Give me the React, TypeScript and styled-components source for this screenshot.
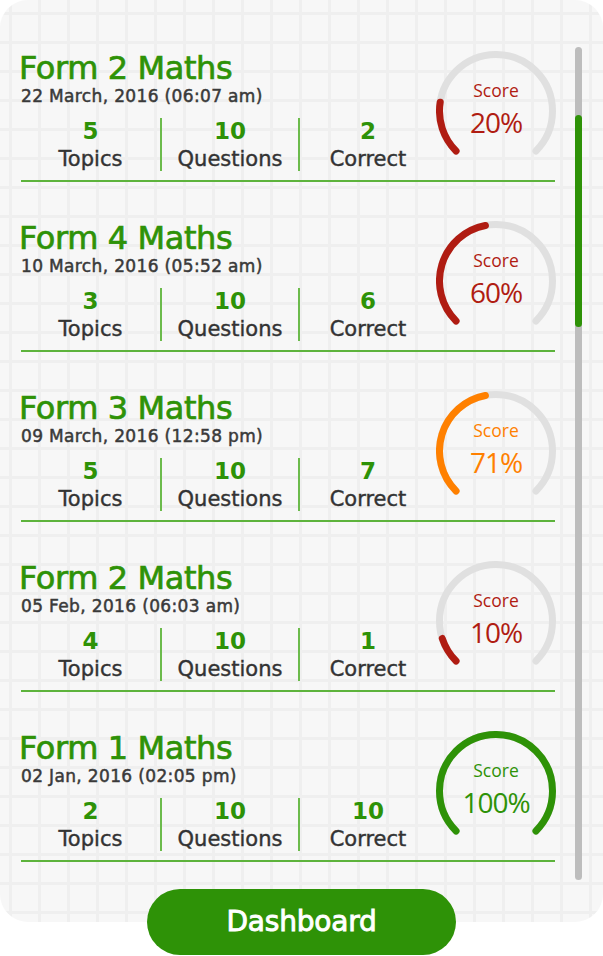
import React from "react";
import styled, { createGlobalStyle } from "styled-components";

const Global = createGlobalStyle`
  html, body { margin: 0; padding: 0; background: #ffffff; }
  body { font-family: "DejaVu Sans", Verdana, sans-serif; }
  * { box-sizing: border-box; }
`;

const Page = styled.div`
  width: 603px;
  height: 956px;
  overflow: hidden;
  display: flex;
  flex-direction: column;
`;

const Card = styled.div`
  height: 922px;
  border-radius: 28px;
  background-color: #f7f7f7;
  background-image:
    linear-gradient(to right, #efefef 3px, transparent 3px),
    linear-gradient(to bottom, #efefef 3px, transparent 3px);
  background-size: 29px 29px;
  background-position: 9px 12px;
  display: flex;
  overflow: hidden;
`;

const List = styled.div`
  width: 556px;
  padding: 41px 0 0 21px;
  display: flex;
  flex-direction: column;
  gap: 29px;
`;

const Item = styled.div`
  width: 534px;
  display: flex;
  align-items: flex-start;
  padding: 10px 0 9px;
  border-bottom: 2px solid #5db33c;
`;

const Info = styled.div`
  width: 415px;
  display: flex;
  flex-direction: column;
`;

const Title = styled.div`
  font-size: 32px;
  line-height: 34px;
  color: #2e9207;
  letter-spacing: -0.4px;
  margin-left: -2px;
  -webkit-text-stroke: 0.7px #2e9207;
`;

const DateText = styled.div`
  font-size: 17px;
  line-height: 20px;
  color: #3a3a3a;
  margin-top: 1px;
  letter-spacing: 0.35px;
  -webkit-text-stroke: 0.5px #3a3a3a;
`;

const Stats = styled.div`
  display: grid;
  grid-template-columns: 139px 138px 138px;
  margin-top: 12px;
`;

const Stat = styled.div<{ $divider?: boolean }>`
  display: flex;
  flex-direction: column;
  align-items: center;
  border-left: ${(p) => (p.$divider ? "2px solid #6cbb4c" : "none")};
`;

const Num = styled.div`
  font-size: 23px;
  line-height: 26px;
  font-weight: bold;
  color: #2e9207;
`;

const Label = styled.div`
  font-size: 21px;
  line-height: 24px;
  color: #333333;
  margin-top: 3px;
  -webkit-text-stroke: 0.4px #333333;
`;

const GaugeWrap = styled.div`
  position: relative;
  width: 120px;
  height: 120px;
  flex: none;
`;

const GaugeText = styled.div<{ $color: string }>`
  position: absolute;
  inset: 0;
  display: flex;
  flex-direction: column;
  align-items: center;
  padding-top: 29px;
  color: ${(p) => p.$color};
  font-family: "Open Sans", "Noto Sans", sans-serif;
`;

const ScoreLabel = styled.div`
  font-size: 17.5px;
  line-height: 20px;
`;

const ScoreValue = styled.div`
  font-size: 28px;
  line-height: 34px;
  margin-top: 5px;
  letter-spacing: -1px;
`;

const Track = styled.div`
  position: relative;
  margin: 47px 0 0 19px;
  width: 7px;
  height: 833px;
  border-radius: 4px;
  background: #bdbdbd;
`;

const Thumb = styled.div`
  position: absolute;
  left: 0;
  top: 68px;
  width: 7px;
  height: 212px;
  border-radius: 4px;
  background: #2e9207;
`;

const Button = styled.button`
  align-self: center;
  margin-top: -33px;
  width: 309px;
  height: 66px;
  border: none;
  border-radius: 33px;
  background: #2e9207;
  color: #ffffff;
  font-family: "DejaVu Sans", Verdana, sans-serif;
  font-size: 28px;
  letter-spacing: -0.2px;
  -webkit-text-stroke: 0.9px #ffffff;
  padding: 0 0 2px;
`;

type Entry = {
  title: string;
  date: string;
  topics: number;
  questions: number;
  correct: number;
  score: string;
  fill: number;
  color: string;
};

const data: Entry[] = [
  { title: "Form 2 Maths", date: "22 March, 2016 (06:07 am)", topics: 5, questions: 10, correct: 2, score: "20%", fill: 0.2, color: "#b01c12" },
  { title: "Form 4 Maths", date: "10 March, 2016 (05:52 am)", topics: 3, questions: 10, correct: 6, score: "60%", fill: 0.46, color: "#b01c12" },
  { title: "Form 3 Maths", date: "09 March, 2016 (12:58 pm)", topics: 5, questions: 10, correct: 7, score: "71%", fill: 0.46, color: "#ff8000" },
  { title: "Form 2 Maths", date: "05 Feb, 2016 (06:03 am)", topics: 4, questions: 10, correct: 1, score: "10%", fill: 0.1, color: "#b01c12" },
  { title: "Form 1 Maths", date: "02 Jan, 2016 (02:05 pm)", topics: 2, questions: 10, correct: 10, score: "100%", fill: 1, color: "#2e9207" },
];

const C = 60;
const R = 56.5;
const pt = (deg: number) => {
  const a = (deg * Math.PI) / 180;
  return [C + R * Math.sin(a), C - R * Math.cos(a)];
};
const arc = (from: number, sweep: number) => {
  const [x1, y1] = pt(from);
  const [x2, y2] = pt(from + sweep);
  const large = sweep > 180 ? 1 : 0;
  return `M ${x1.toFixed(2)} ${y1.toFixed(2)} A ${R} ${R} 0 ${large} 1 ${x2.toFixed(2)} ${y2.toFixed(2)}`;
};

function Gauge({ fill, color, score }: { fill: number; color: string; score: string }) {
  return (
    <GaugeWrap>
      <svg width="120" height="120" viewBox="0 0 120 120">
        <path d={arc(225, 270)} fill="none" stroke="#e0e0e0" strokeWidth="7" strokeLinecap="round" />
        <path d={arc(225, 270 * fill)} fill="none" stroke={color} strokeWidth="7" strokeLinecap="round" />
      </svg>
      <GaugeText $color={color}>
        <ScoreLabel>Score</ScoreLabel>
        <ScoreValue>{score}</ScoreValue>
      </GaugeText>
    </GaugeWrap>
  );
}

export default function App() {
  return (
    <Page>
      <Global />
      <Card>
        <List>
          {data.map((d, i) => (
            <Item key={i}>
              <Info>
                <Title>{d.title}</Title>
                <DateText>{d.date}</DateText>
                <Stats>
                  <Stat>
                    <Num>{d.topics}</Num>
                    <Label>Topics</Label>
                  </Stat>
                  <Stat $divider>
                    <Num>{d.questions}</Num>
                    <Label>Questions</Label>
                  </Stat>
                  <Stat $divider>
                    <Num>{d.correct}</Num>
                    <Label>Correct</Label>
                  </Stat>
                </Stats>
              </Info>
              <Gauge fill={d.fill} color={d.color} score={d.score} />
            </Item>
          ))}
        </List>
        <Track>
          <Thumb />
        </Track>
      </Card>
      <Button>Dashboard</Button>
    </Page>
  );
}
